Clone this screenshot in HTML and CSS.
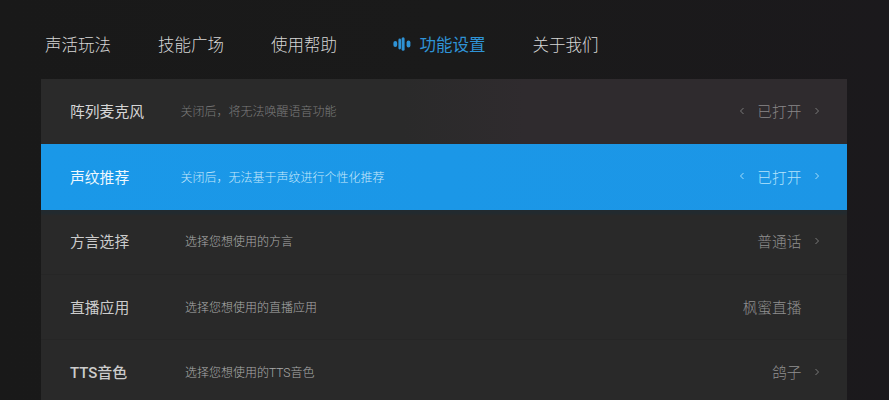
FILE: index.html
```html
<!DOCTYPE html>
<html lang="zh">
<head>
<meta charset="utf-8">
<title>功能设置</title>
<link rel="stylesheet" href="styles.css">
</head>
<body>
<div class="page">
  <nav class="nav">
    <span class="tab">声活玩法</span>
    <span class="tab">技能广场</span>
    <span class="tab">使用帮助</span>
    <span class="tab active">
      <svg class="wave" viewBox="0 0 18 14" width="18" height="14"><g fill="#2f93d6"><rect x="0.4" y="4" width="3.8" height="6" rx="1.9"/><rect x="5.4" y="1.6" width="2.6" height="10.8" rx="1.3"/><rect x="8.6" y="0.2" width="3" height="13.6" rx="1.5"/><rect x="13.6" y="3.6" width="3.8" height="6.8" rx="1.9"/></g></svg>
      功能设置
    </span>
    <span class="tab">关于我们</span>
  </nav>
  <main class="panel">
    <div class="row first toggle">
      <span class="title">阵列麦克风</span>
      <span class="desc">关闭后，将无法唤醒语音功能</span>
      <span class="side">
        <svg class="chev" viewBox="0 0 6 8" width="6" height="8"><path d="M4.5 1 1.5 4l3 3"/></svg>
        <span class="value">已打开</span>
        <svg class="chev" viewBox="0 0 6 8" width="6" height="8"><path d="M1.5 1l3 3-3 3"/></svg>
      </span>
    </div>
    <div class="row selected toggle">
      <span class="title">声纹推荐</span>
      <span class="desc">关闭后，无法基于声纹进行个性化推荐</span>
      <span class="side">
        <svg class="chev" viewBox="0 0 6 8" width="6" height="8"><path d="M4.5 1 1.5 4l3 3"/></svg>
        <span class="value">已打开</span>
        <svg class="chev" viewBox="0 0 6 8" width="6" height="8"><path d="M1.5 1l3 3-3 3"/></svg>
      </span>
    </div>
    <div class="row after-selected">
      <span class="title">方言选择</span>
      <span class="desc">选择您想使用的方言</span>
      <span class="side">
        <span class="value">普通话</span>
        <svg class="chev" viewBox="0 0 6 8" width="6" height="8"><path d="M1.5 1l3 3-3 3"/></svg>
      </span>
    </div>
    <div class="row">
      <span class="title">直播应用</span>
      <span class="desc">选择您想使用的直播应用</span>
      <span class="side">
        <span class="value">枫蜜直播</span>
        <span class="chev-space"></span>
      </span>
    </div>
    <div class="row last">
      <span class="title">TTS音色</span>
      <span class="desc">选择您想使用的TTS音色</span>
      <span class="side">
        <span class="value">鸽子</span>
        <svg class="chev" viewBox="0 0 6 8" width="6" height="8"><path d="M1.5 1l3 3-3 3"/></svg>
      </span>
    </div>
  </main>
</div>
</body>
</html>
```
FILE: styles.css
```css
* { box-sizing: border-box; }
html, body { margin: 0; height: 100%; overflow: hidden; }
body {
  background: linear-gradient(90deg, #191919 0%, #1a1a1a 50%, #1b191c 100%);
  font-family: "Roboto", "Noto Sans CJK SC", sans-serif;
}
.page { width: 889px; height: 400px; overflow: hidden; }
.nav {
  display: flex;
  align-items: center;
  height: 79px;
  padding: 9px 0 0 45px;
  color: #d6d6d6;
  font-size: 16.5px;
  font-weight: 300;
}
.tab { display: flex; align-items: center; margin-right: 47px; white-space: nowrap; }
.tab.active { color: #2f93d6; margin-left: 8.6px; font-weight: 400; }
.wave { margin-right: 9px; }
.panel { width: 806px; margin-left: 41.3px; }
.row {
  display: flex;
  align-items: center;
  height: 65.25px;
  padding: 0 27.5px 1.6px 28.7px;
  background: #292929;
  border-bottom: 1px solid #262626;
}
.first {
  background: linear-gradient(90deg, #2a2a2a 0%, #2a2a2a 45%, #2f2b2e 60%, #2f2b2e 100%);
  border-bottom: 0;
}
.selected { background: linear-gradient(90deg, #1a98e8, #1c96e6); border-bottom: 0; color: #fff; }
.after-selected { background: linear-gradient(180deg, #222a2f 0, #222a2f 3px, #292929 6px); }
.last { border-bottom: 0; }
.title { width: 115px; font-size: 14.8px; color: #cccccc; white-space: nowrap; }
.toggle .title { width: 110.5px; }
.first .title { color: #d6d6d6; }
.selected .title { color: #eef8fe; }
.last .title { font-size: 15px; font-weight: 500; }
.desc { flex: 1; font-size: 12px; font-weight: 300; color: #ababab; white-space: nowrap; }
.first .desc { color: #7c7c7c; }
.selected .desc { color: #c6e8fb; }
.side { display: flex; align-items: center; gap: 12.5px; }
.value { font-size: 14.67px; font-weight: 300; color: #8f8f8f; white-space: nowrap; }
.selected .value { color: #b4e4fc; }
.first .value { color: #8a8789; }
.chev, .chev-space { width: 6px; height: 8px; display: block; }
.chev path { fill: none; stroke: #7a7a7a; stroke-width: 1; }
.selected .chev path { stroke: #a8defa; }
```
